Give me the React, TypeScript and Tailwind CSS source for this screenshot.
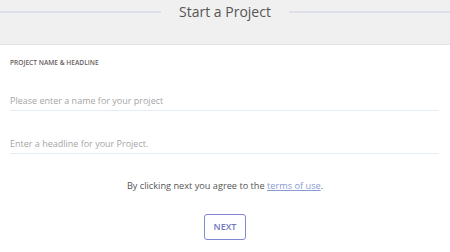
import React from "react";

const App = () => {
  return (
    <div className="w-[450px] h-[252px] bg-white font-['Open_Sans',sans-serif] overflow-hidden">
      <div className="h-[45px] bg-[#f0f0f0] border-b border-[#e4e4e4]">
        <div className="flex items-center h-[24px]">
          <div className="flex-1 h-[2px] bg-[#dde0ea]" />
          <h1 className="px-[18px] text-[14px] leading-[24px] text-[#555]">Start a Project</h1>
          <div className="flex-1 h-[2px] bg-[#dde0ea]" />
        </div>
      </div>

      <div className="px-[10px]">
        <p className="mt-[13px] text-[6.6px] leading-[10px] font-semibold uppercase text-[#66605c]">
          Project name &amp; headline
        </p>
        <input
          className="mt-[23px] block w-[429px] h-[20px] text-[9px] text-[#555] placeholder-[#a5a5a5] border-b border-[#e5ebf7] outline-none"
          placeholder="Please enter a name for your project"
        />
        <input
          className="mt-[23px] block w-[429px] h-[20px] text-[9px] text-[#555] placeholder-[#a5a5a5] border-b border-[#e5ebf7] outline-none"
          placeholder="Enter a headline for your Project."
        />
        <p className="mt-[25px] text-center text-[9.2px] leading-[14px] text-[#555]">
          By clicking next you agree to the{" "}
          <a href="#" className="text-[#8a9ad2] underline">terms of use</a>.
        </p>
        <div className="flex justify-center mt-[21px]">
          <button className="w-[42px] h-[26px] rounded-[3px] border border-[#8088cf] text-[#6f76bd] text-[9px] font-semibold">
            NEXT
          </button>
        </div>
      </div>
    </div>
  );
};

export default App;
